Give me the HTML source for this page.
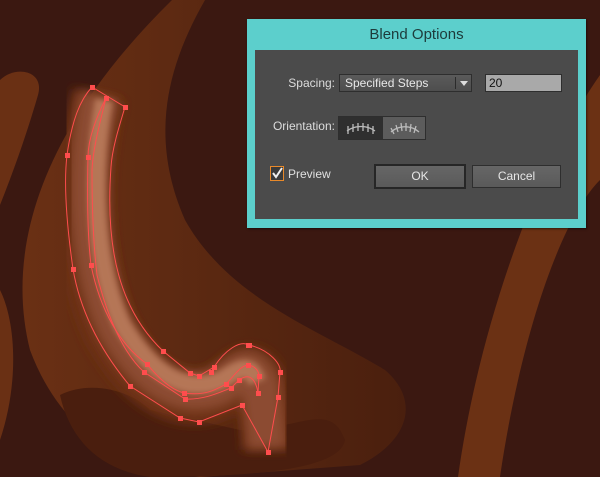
<!DOCTYPE html>
<html><head><meta charset="utf-8"><style>
*{margin:0;padding:0;box-sizing:border-box}
body{width:600px;height:477px;overflow:hidden;background:#3b1811;font-family:"Liberation Sans",sans-serif;position:relative}
svg.bg{position:absolute;left:0;top:0}
.dlg{position:absolute;left:247px;top:19px;width:339px;height:209px;background:#5ccfcc;box-shadow:1px 1px 2px rgba(0,0,0,.5)}
.title{position:absolute;left:0;right:0;top:7px;text-align:center;font-size:15px;color:#1d3b3b}
.inner{position:absolute;left:8px;top:31px;width:323px;height:169px;background:#4b4b4b}
.a{position:absolute}
.lbl{font-size:12px;color:#dcdcdc;text-align:right}
.dd{left:84px;top:24px;width:133px;height:18px;background:linear-gradient(#5a5a5a,#4e4e4e);border:1px solid #2e2e2e;color:#e8e8e8;font-size:12px;line-height:16px;padding-left:5px}
.dd .dv{position:absolute;left:115px;top:2px;width:1px;height:12px;background:#2b2b2b}
.dd .ar{position:absolute;left:120px;top:6px;width:0;height:0;border-left:4px solid transparent;border-right:4px solid transparent;border-top:5px solid #ddd}
.inp{left:230px;top:24px;width:77px;height:18px;background:#a9a9a9;border:1px solid #2e2e2e;font-size:12px;line-height:16px;padding-left:3px;color:#111}
.btn{background:linear-gradient(#666,#5a5a5a);color:#e6e6e6;font-size:12px;text-align:center}
</style></head><body>
<svg class="bg" width="600" height="477" viewBox="0 0 600 477">
<defs>
<linearGradient id="g1" x1="0" y1="0" x2="1" y2="0"><stop offset="0" stop-color="#6a3014"/><stop offset=".5" stop-color="#5a2811"/><stop offset="1" stop-color="#4a1f0e"/></linearGradient>
<filter id="bl"><feGaussianBlur stdDeviation="5"/></filter>
<filter id="bl2"><feGaussianBlur stdDeviation="3"/></filter>
</defs>
<path d="M172 0 L205 0 C165 70 150 140 185 220 C230 300 320 330 385 370 C420 400 410 440 360 465 L200 477 C120 470 60 430 30 350 C5 250 40 130 172 0Z" fill="url(#g1)"/>
<path d="M60 395 C90 380 130 390 150 410 L240 430 C300 430 330 400 345 440 C340 470 250 477 150 477 C100 470 70 440 60 395Z" fill="#4a1e0e"/>
<path d="M0 80 C15 65 45 70 38 95 C25 140 10 180 0 205Z" fill="#6a3014"/>
<path d="M0 290 C15 320 20 380 0 440Z" fill="#6a3014"/>
<path d="M600 75 C540 160 480 320 458 477 L500 477 C520 340 560 220 600 180Z" fill="#6b3114"/>
<g fill="none" stroke-linecap="butt" stroke-linejoin="round">
<path d="M98 95 C80 160 78 260 110 330 C140 385 180 410 220 392 C240 378 250 360 262 385 C266 410 268 430 268 450" stroke="#6e3219" stroke-width="52" filter="url(#bl)"/>
<path d="M100 95 C84 160 84 260 116 328 C146 380 182 402 220 386 C240 372 250 360 260 385 C263 410 266 430 267 448" stroke="#8c4c30" stroke-width="38" filter="url(#bl)"/>
<path d="M104 100 C92 165 92 260 122 325 C152 375 185 395 222 380 C240 368 250 362 257 382" stroke="#b57656" stroke-width="18" filter="url(#bl2)"/>
</g>
<g fill="none" stroke="#ff4d4d" stroke-width="1">
<path d="M92 87 L125 107 C118 130 112 150 111 167 C105 250 120 310 163 351 L190 373 L199 376 L214 367 C225 350 240 340 249 345 C270 350 282 365 280 372 L278 397 L268 452 L242 405 L199 422 L180 418 L130 386 C100 350 80 310 73 269 C66 220 64 180 67 155 C72 120 80 100 92 87Z"/>
<path d="M106 98 C95 120 88 140 88 157 C87 200 88 240 91 265 C100 310 120 345 147 364 C160 380 172 390 184 393 C205 396 215 390 226 384 C235 375 240 366 248 365 C256 366 259 372 259 376 L258 393"/>
<path d="M106 98 C98 130 93 150 92 170 C92 220 94 250 97 275 C108 320 125 355 144 372 L185 399 C205 400 220 392 231 388 L239 380 C250 372 256 380 258 393"/>
</g>
<g fill="#ff4d4d">
<rect x="90" y="85" width="5" height="5"/><rect x="123" y="105" width="5" height="5"/><rect x="104" y="96" width="5" height="5"/>
<rect x="65" y="153" width="5" height="5"/><rect x="86" y="155" width="5" height="5"/><rect x="71" y="267" width="5" height="5"/><rect x="89" y="263" width="5" height="5"/>
<rect x="161" y="349" width="5" height="5"/><rect x="188" y="371" width="5" height="5"/><rect x="197" y="374" width="5" height="5"/><rect x="212" y="365" width="5" height="5"/><rect x="209" y="370" width="5" height="5"/>
<rect x="246" y="343" width="6" height="5"/><rect x="278" y="370" width="5" height="5"/><rect x="276" y="395" width="5" height="5"/><rect x="266" y="450" width="5" height="5"/>
<rect x="240" y="403" width="5" height="5"/><rect x="197" y="420" width="5" height="5"/><rect x="178" y="416" width="5" height="5"/><rect x="128" y="384" width="5" height="5"/>
<rect x="145" y="362" width="5" height="5"/><rect x="142" y="370" width="5" height="5"/><rect x="182" y="391" width="5" height="5"/><rect x="183" y="397" width="5" height="5"/>
<rect x="224" y="382" width="5" height="5"/><rect x="229" y="386" width="5" height="5"/><rect x="237" y="378" width="5" height="5"/><rect x="246" y="363" width="5" height="5"/><rect x="257" y="374" width="5" height="5"/><rect x="256" y="391" width="5" height="5"/>
</g>
</svg>
<div class="dlg">
<div class="title">Blend Options</div>
<div class="inner">
<div class="a lbl" style="left:0;width:80px;top:26px">Spacing:</div>
<div class="a dd">Specified Steps<div class="dv"></div><div class="ar"></div></div>
<div class="a inp">20</div>
<div class="a lbl" style="left:0;width:80px;top:69px">Orientation:</div>
<div class="a" style="left:83px;top:66px;width:88px;height:24px;border:1px solid #2e2e2e;background:#5c5c5c">
<div style="position:absolute;left:0;top:0;width:44px;height:22px;background:#2f2f2f"></div>
<svg style="position:absolute;left:0;top:0" width="88" height="22"><g stroke="#bbb" stroke-width="1.3" fill="none">
<path d="M8 14 C16 8 28 8 36 14"/><path d="M9 9v8M14 7v8M19 6v8M24 6v8M29 7v8M34 9v8"/>
<path d="M52 15 C60 8 72 8 80 15"/><path d="M52 11l3 6M57 8l2 7M62 6l1 8M67 6l0 8M72 7l-1 8M77 9l-2 7"/>
</g></svg></div>
<div class="a" style="left:15px;top:116px;width:14px;height:15px;border:1px solid #e8892a;background:#3a3a3a">
<svg width="12" height="13" style="position:absolute;left:0;top:0"><path d="M2 6l3 4 6-9" stroke="#eee" stroke-width="2" fill="none"/></svg></div>
<div class="a" style="left:33px;top:117px;font-size:12px;color:#e0e0e0">Preview</div>
<div class="a btn" style="left:119px;top:114px;width:92px;height:25px;border:2px solid #262626;line-height:21px">OK</div>
<div class="a btn" style="left:217px;top:115px;width:89px;height:23px;border:1px solid #2e2e2e;line-height:21px">Cancel</div>
</div></div>
</body></html>
